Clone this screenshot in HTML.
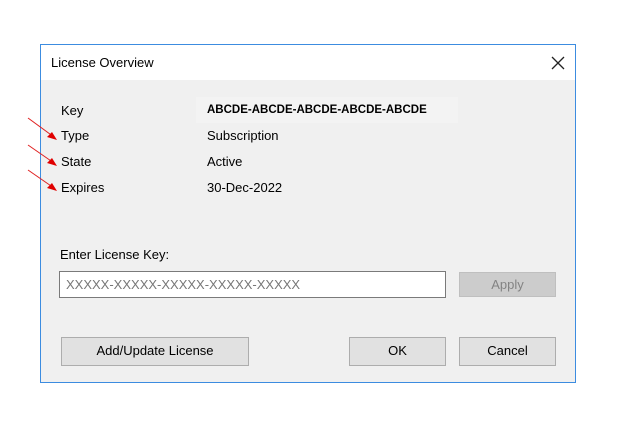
<!DOCTYPE html>
<html><head><style>
body{margin:0;width:624px;height:428px;background:#fff;position:relative;font-family:"Liberation Sans",sans-serif;font-size:13px;color:#000;overflow:hidden}
.dlg{position:absolute;left:40px;top:44px;width:534px;height:337px;border:1px solid #3c8ce0;background:#f0f0f0}
.title{position:absolute;left:0;top:0;width:534px;height:35px;background:#fff}
.t{position:absolute;white-space:nowrap}
.btn{position:absolute;border:1px solid #adadad;background:#e1e1e1;text-align:center;box-sizing:border-box;line-height:26px}
</style></head><body>
<div class="dlg">
<div class="title"><span class="t" style="left:10px;top:10px">License Overview</span>
<svg style="position:absolute;left:510px;top:11px" width="14" height="14"><path d="M1 1L13 13M13 1L1 13" stroke="#222" stroke-width="1.3"/></svg></div>
<div style="position:absolute;left:155px;top:52px;width:262px;height:26px;background:#f3f3f3"></div>
<span class="t" style="left:20px;top:58px">Key</span>
<span class="t" style="left:166px;top:59px;font-weight:bold;font-size:11.5px">ABCDE-ABCDE-ABCDE-ABCDE-ABCDE</span>
<span class="t" style="left:20px;top:83px">Type</span><span class="t" style="left:166px;top:83px">Subscription</span>
<span class="t" style="left:20px;top:109px">State</span><span class="t" style="left:166px;top:109px">Active</span>
<span class="t" style="left:20px;top:135px">Expires</span><span class="t" style="left:166px;top:135px">30-Dec-2022</span>
<span class="t" style="left:19px;top:202px">Enter License Key:</span>
<div style="position:absolute;left:18px;top:226px;width:385px;height:25px;border:1px solid #7a7a7a;background:#fff"><span class="t" style="left:6px;top:5px;color:#777">XXXXX-XXXXX-XXXXX-XXXXX-XXXXX</span></div>
<div class="btn" style="left:418px;top:227px;width:97px;height:25px;line-height:23px;background:#ccc;border-color:#bfbfbf;color:#838383">Apply</div>
<div class="btn" style="left:20px;top:292px;width:188px;height:29px">Add/Update License</div>
<div class="btn" style="left:308px;top:292px;width:97px;height:29px">OK</div>
<div class="btn" style="left:418px;top:292px;width:97px;height:29px">Cancel</div>
</div>
<svg style="position:absolute;left:0;top:0" width="624" height="428">
<g stroke="#e02020" stroke-width="1"><line x1="28" y1="118" x2="54" y2="137"/><line x1="28" y1="145" x2="54" y2="163"/><line x1="28" y1="170" x2="54" y2="188"/></g>
<g fill="#e00000"><polygon points="47,137 57,140 52,132"/><polygon points="47,163 57,166 52,158"/><polygon points="47,188 57,191 52,183"/></g>
</svg>
</body></html>
